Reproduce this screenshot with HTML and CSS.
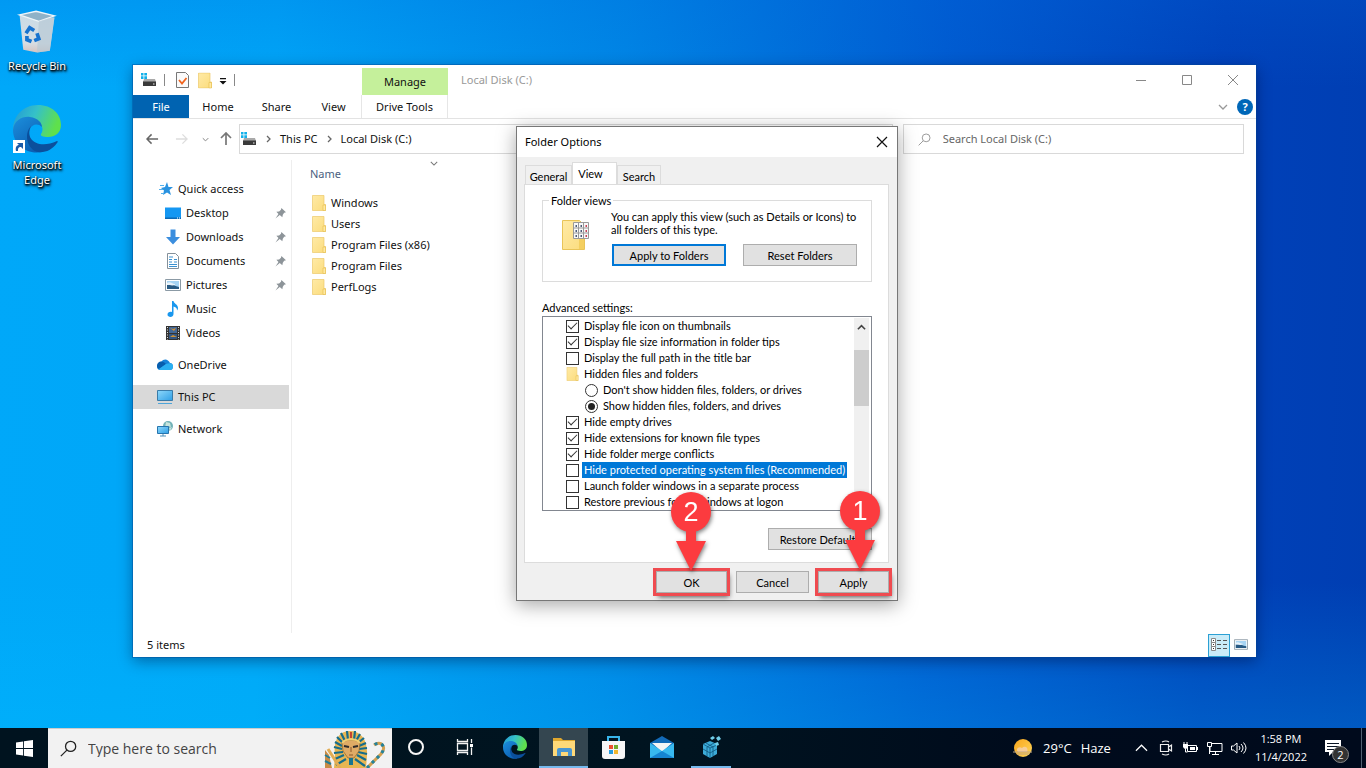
FILE: index.html
```html
<!DOCTYPE html>
<html lang="en">
<head>
<meta charset="utf-8">
<title>Folder Options</title>
<link rel="stylesheet" href="styles.css">
</head>
<body>
<svg class="sprite" aria-hidden="true">
  <defs>
    <linearGradient id="gEdgeA" x1="0" y1="0" x2="1" y2="0.3"><stop offset="0" stop-color="#2196d8"/><stop offset=".5" stop-color="#35c1c8"/><stop offset="1" stop-color="#5fe04c"/></linearGradient>
    <linearGradient id="gEdgeB" x1="0" y1="0" x2=".6" y2="1"><stop offset="0" stop-color="#1c8fdc"/><stop offset="1" stop-color="#0c60b4"/></linearGradient>
    <linearGradient id="gFolder" x1="0" y1="0" x2="1" y2="1"><stop offset="0" stop-color="#ffeaa6"/><stop offset="1" stop-color="#fbdc7c"/></linearGradient>
    <linearGradient id="gScreen" x1="0" y1="0" x2="1" y2="1"><stop offset="0" stop-color="#8ed8fb"/><stop offset="1" stop-color="#2f9fe6"/></linearGradient>
    <linearGradient id="gBin" x1="0" y1="0" x2="0" y2="1"><stop offset="0" stop-color="#c9dbe6"/><stop offset=".75" stop-color="#d6dde3"/><stop offset="1" stop-color="#d5c3c0"/></linearGradient>
    <linearGradient id="gSun" x1="0" y1="0" x2="1" y2="1"><stop offset="0" stop-color="#f9a51c"/><stop offset="1" stop-color="#ffd75a"/></linearGradient>
  </defs>
  <symbol id="folder" viewBox="0 0 14 16"><path d="M.5.5h11.500v9h1.500v6H.5z" fill="url(#gFolder)" stroke="#ecc96a" stroke-width=".7"/><path d="M11 10h2.500v5.500H11z" fill="#ffe9a0" stroke="#e5bc4c" stroke-width=".6"/></symbol>
  <symbol id="drive" viewBox="0 0 16 14"><path d="M0 0h2.500v2.500H0zM3.300 0H6v2.500H3.300zM0 3.300h2.500V6H0zM3.300 3.300H6V6H3.300z" fill="#12b0ea"/><path d="M3 6h11l1 3H2z" fill="#a9a9a9"/><path d="M2 8.500h13V13H2z" fill="#3a3a3a"/><path d="M12 10.500h1.500v1H12z" fill="#eee"/></symbol>
  <symbol id="edge" viewBox="0 0 48 48">
    <path d="M0 25C0 11 10 0 25 0c14 0 23 9 23 20 0 8-6 12-13 12-5 0-8-1-7-3 3-4 2-11-6-11C11 18 4 24 0 25z" fill="url(#gEdgeA)"/>
    <path d="M0 25c1-10 10-14 17-13 8 1 12 6 12 10-4-4-10-3-12 2-3 9 4 18 12 23C13 50 0 39 0 25z" fill="url(#gEdgeB)"/>
    <path d="M18 21c-7 13 7 24 26 15 1 0 1 1 0 2-5 7-12 10-19 9-10-2-15-17-7-26z" fill="#0b4f9c"/>
  </symbol>
  <symbol id="pin" viewBox="0 0 12 12"><path d="M7 0l5 4.500-2 .8-1.500 2L8 10 5.200 7.700.5 11.500 3.800 6.500 1.500 4.200l3-.4 2-1.800z" fill="#8d9499"/></symbol>
  <symbol id="picture" viewBox="0 0 16 12"><path d="M.5.500h15v11H.5z" fill="#fff" stroke="#8b9aa5"/><path d="M2 2h12v8H2z" fill="#a7d4f3"/><path d="M2 6c4-2 7 1 12 2v2H2z" fill="#285a83"/><path d="M2 4c3-2 5 1 8 1v1c-3 1-5 0-8 0z" fill="#e8f3fb"/></symbol>
  <symbol id="chev" viewBox="0 0 10 6"><path d="M1 1l4 4 4-4" fill="none" stroke="currentColor" stroke-width="1.300"/></symbol>
  <symbol id="lens" viewBox="0 0 16 16"><circle cx="10" cy="6" r="4.800" fill="none" stroke="currentColor" stroke-width="1.200"/><path d="M6.500 9.500L.8 15.200" stroke="currentColor" stroke-width="1.200"/></symbol>
</svg>

<main class="desktop">
  <div class="shortcuts">
    <a class="shortcut" href="#">
      <svg class="shortcut-icon" viewBox="0 0 48 48"><path d="M5 7l38 3-5 36-14 2-15-3z" fill="url(#gBin)"/><path d="M5 7l18-4 20 5-17 6z" fill="#8fb2c8" stroke="#eef5f9" stroke-width="1.500"/><path d="M26 14l17-5-5 37-14 2z" fill="#b5c8d4" opacity=".65"/><g fill="none" stroke="#1673cf" stroke-width="4"><path d="M12 27l4-6 5 3"/><path d="M24 27l2 6-5 2"/><path d="M18 36l-5-2v-4"/></g></svg>
      <span>Recycle Bin</span>
    </a>
    <a class="shortcut" href="#">
      <svg class="shortcut-icon large" viewBox="0 0 50 50"><use href="#edge" x="1" y="1" width="48" height="48"/><path d="M1 36h12v13H1z" fill="#fff"/><path d="M4 47c-1-4 1-6 3-6l-2-2h6v6l-2-2c-3 0-3 2-3 4z" fill="#1c5ba8"/></svg>
      <span>Microsoft<br>Edge</span>
    </a>
  </div>

  <section class="explorer" aria-label="Local Disk (C:)">
    <header class="titlebar">
      <div class="quickbar">
        <svg class="i16" viewBox="0 0 16 14"><use href="#drive"/></svg>
        <i class="bar"></i>
        <svg class="doc" viewBox="0 0 13 16"><path d="M.5.500h9l3 3v12H.5z" fill="#fafafa" stroke="#777"/><path d="M3 8l3 3.500L10.500 6" fill="none" stroke="#f0641e" stroke-width="1.800"/></svg>
        <svg class="fold" viewBox="0 0 14 16"><use href="#folder"/></svg>
        <svg class="more" viewBox="0 0 8 7"><path d="M1 0h6v1.300H1zM.5 3h7L4 6.500z" fill="#111"/></svg>
        <i class="bar"></i>
      </div>
      <div class="manage">Manage</div>
      <h1 class="caption">Local Disk (C:)</h1>
      <div class="win-buttons">
        <button aria-label="Minimize"><svg viewBox="0 0 12 12"><path d="M1 6.500h10" stroke="#888"/></svg></button>
        <button aria-label="Maximize"><svg viewBox="0 0 12 12"><path d="M1.500 1.500h9v9h-9z" fill="none" stroke="#888"/></svg></button>
        <button aria-label="Close"><svg viewBox="0 0 12 12"><path d="M1 1l10 10M11 1L1 11" stroke="#888"/></svg></button>
      </div>
    </header>
    <nav class="ribbon">
      <button class="file">File</button>
      <button class="home">Home</button>
      <button class="share">Share</button>
      <button class="view">View</button>
      <button class="tools">Drive Tools</button>
      <div class="ribbon-end">
        <svg class="chev" viewBox="0 0 10 6"><use href="#chev"/></svg>
        <button class="help" aria-label="Help">?</button>
      </div>
    </nav>
    <div class="navigate">
      <div class="arrows">
        <svg class="arrow" viewBox="0 0 14 12"><path d="M6 1L1 6l5 5M1 6h12" fill="none" stroke="#666" stroke-width="1.600"/></svg>
        <svg class="arrow pale" viewBox="0 0 14 12"><path d="M8 1l5 5-5 5M13 6H1" fill="none" stroke="#ddd" stroke-width="1.400"/></svg>
        <svg class="tiny" viewBox="0 0 10 6"><use href="#chev"/></svg>
        <svg class="up" viewBox="0 0 12 14"><path d="M1 6l5-5 5 5M6 1v12" fill="none" stroke="#777" stroke-width="1.700"/></svg>
      </div>
      <div class="address">
        <svg class="i16" viewBox="0 0 16 14"><use href="#drive"/></svg>
        <svg class="crumb" viewBox="0 0 5 8"><path d="M1 1l3 3-3 3" fill="none" stroke="#666" stroke-width="1.300"/></svg>
        <a href="#">This PC</a>
        <svg class="crumb" viewBox="0 0 5 8"><path d="M1 1l3 3-3 3" fill="none" stroke="#666" stroke-width="1.300"/></svg>
        <a href="#">Local Disk (C:)</a>
      </div>
      <label class="find">
        <svg viewBox="0 0 16 16"><use href="#lens"/></svg>
        <input type="text" placeholder="Search Local Disk (C:)" aria-label="Search Local Disk (C:)">
      </label>
    </div>
    <div class="content">
      <nav class="tree">
        <a href="#" class="root"><svg viewBox="0 0 16 16"><path d="M10 1l1.500 5H16l-3.500 3 1.500 5-4-2.500L6 14l1-4.500L4 7l4-1z" fill="#2a93e0"/><path d="M3 4.500h4M2 8.500h4M4 12.500h3" stroke="#55b1ec"/></svg>Quick access</a>
        <a href="#"><svg viewBox="0 0 16 16"><path d="M0 2.500h16v11H0z" fill="#1597f2"/><path d="M0 12.500h16v1.500H0z" fill="#0c68b5"/><path d="M12 12.500h1v1h-1zM14 12.500h1v1h-1z" fill="#fff"/></svg>Desktop<svg class="pin" viewBox="0 0 12 12"><use href="#pin"/></svg></a>
        <a href="#"><svg viewBox="0 0 16 16"><path d="M5.500.500h5V8H15l-7 7.500L1 8h4.500z" fill="#3b8ede"/></svg>Downloads<svg class="pin" viewBox="0 0 12 12"><use href="#pin"/></svg></a>
        <a href="#"><svg viewBox="0 0 16 16"><path d="M2.500.500h8l3 3v12h-11z" fill="#fff" stroke="#84909a"/><path d="M4 4h4M4 6.500h3M9 6.500h3M4 9h3M9 9h3M4 11.500h8M4 13.500h8" stroke="#3b91d0"/></svg>Documents<svg class="pin" viewBox="0 0 12 12"><use href="#pin"/></svg></a>
        <a href="#"><svg viewBox="0 0 16 16"><use href="#picture" y="2" width="16" height="12"/></svg>Pictures<svg class="pin" viewBox="0 0 12 12"><use href="#pin"/></svg></a>
        <a href="#"><svg viewBox="0 0 16 16"><path d="M7 0h1.500c.5 3 4.500 3 4.500 7 0 1-.5 2-1 2.500.3-3-2-3.500-3.500-4V13c0 4-6 3.500-6 .7C2.500 11 5 10.500 7 11z" fill="#1997ee"/></svg>Music</a>
        <a href="#"><svg viewBox="0 0 16 16"><path d="M1 1h14v14H1z" fill="#333"/><path d="M4 2h8v6H4z" fill="#426796"/><path d="M4 9h8v5H4z" fill="#345783"/><path d="M5 3l3 1 3-1-2 3zM5 12l3-2 4 2z" fill="#cf9136"/><path d="M2.500 2v13M13.500 2v13" stroke="#ddd" stroke-dasharray="1 1.500"/></svg>Videos</a>
        <a href="#" class="top"><svg viewBox="0 0 16 16"><path d="M4 5c3-4 7-3 9 1 4 0 4 7 0 7H3C-1 13-1 6 4 5z" fill="#1683d9"/><path d="M1 6c3-3 6-1 8 1l-7 5c-3-1-2-5-1-6z" fill="#075eae"/><path d="M2 12l7-5c5-2 7 0 7 2 0 3-1 4-3 4H3z" fill="#2bb0f2"/></svg>OneDrive</a>
        <a href="#" class="top selected"><svg viewBox="0 0 16 16"><path d="M.5 1.500h15v10H.5z" fill="url(#gScreen)" stroke="#3a7ba8"/><path d="M1 14.500h14" stroke="#4ea5d9"/></svg>This PC</a>
        <a href="#" class="top"><svg viewBox="0 0 16 16"><circle cx="11" cy="5" r="5" fill="#72b2b8"/><path d="M9 1l4 1 1 4-3-1-3 2zM12 7l3-1-2 4z" fill="#c7e4dc"/><path d="M.5 5.500h11v7H.5z" fill="url(#gScreen)" stroke="#2775ae"/><path d="M3 15h6M6 13v2" stroke="#5090b8"/></svg>Network</a>
      </nav>
      <div class="files">
        <svg class="sort" viewBox="0 0 10 6"><use href="#chev"/></svg>
        <h2>Name</h2>
        <ul>
          <li><svg viewBox="0 0 14 16"><use href="#folder"/></svg>Windows</li>
          <li><svg viewBox="0 0 14 16"><use href="#folder"/></svg>Users</li>
          <li><svg viewBox="0 0 14 16"><use href="#folder"/></svg>Program Files (x86)</li>
          <li><svg viewBox="0 0 14 16"><use href="#folder"/></svg>Program Files</li>
          <li><svg viewBox="0 0 14 16"><use href="#folder"/></svg>PerfLogs</li>
        </ul>
      </div>
    </div>
    <footer class="status">
      <span>5 items</span>
      <button class="details on" aria-label="Details view"><svg viewBox="0 0 16 14"><path d="M.5.500h4v4h-4zM.5 4.500h4v4h-4zM.5 8.500h4v4h-4z" fill="#fff" stroke="#888"/><path d="M2 2h1v1H2zM2 6h1v1H2zM2 10h1v1H2z" fill="#333"/><path d="M6 2.500h4M12 2.500h4M6 6.500h4M12 6.500h4M6 10.500h4M12 10.500h4" stroke="#555"/></svg></button>
      <button class="details" aria-label="Large icons view"><svg viewBox="0 0 16 14"><use href="#picture" x="1" y="1" width="14" height="11"/></svg></button>
    </footer>
  </section>

  <section class="dialog" role="dialog" aria-label="Folder Options">
    <header class="dialog-title">
      <h2>Folder Options</h2>
      <button aria-label="Close"><svg viewBox="0 0 12 12"><path d="M1 1l10 10M11 1L1 11" stroke="#111" stroke-width="1.200"/></svg></button>
    </header>
    <div class="tabs">
      <button>General</button>
      <button class="active">View</button>
      <button>Search</button>
    </div>
    <div class="panel">
      <fieldset>
        <legend>Folder views</legend>
        <svg class="views-icon" viewBox="0 0 28 30"><path d="M.5.500h17l5 5v24H.5z" fill="url(#gFolder)" stroke="#e9c458"/><path d="M17 18h5v11h-5z" fill="#f4cf60"/><path d="M11.500 2.500h15v16h-15z" fill="#f8f8f8" stroke="#999"/><path d="M16.500 3v15M21.500 3v15M12 8h14M12 13h14" stroke="#999"/><path d="M13.500 5h1.500v2h-1.500zM18.500 5H20v2h-1.500zM13.500 10h1.500v2h-1.500zM18.500 10H20v2h-1.500zM13.500 15h1.500v2h-1.500zM18.500 15H20v2h-1.500z" fill="#4c5b77"/><path d="M23.500 5H25v2h-1.500zM23.500 10H25v2h-1.500zM23.500 15H25v2h-1.500z" fill="#c84457"/></svg>
        <div class="views-text">
          <p>You can apply this view (such as Details or Icons) to<br>all folders of this type.</p>
          <div class="pair">
            <button class="push primary">Apply to Folders</button>
            <button class="push">Reset Folders</button>
          </div>
        </div>
      </fieldset>
      <h3>Advanced settings:</h3>
      <div class="listbox">
        <div class="options">
          <label><input type="checkbox" checked><span>Display file icon on thumbnails</span></label>
          <label><input type="checkbox" checked><span>Display file size information in folder tips</span></label>
          <label><input type="checkbox"><span>Display the full path in the title bar</span></label>
          <div class="group"><svg viewBox="0 0 14 16"><use href="#folder"/></svg><span>Hidden files and folders</span></div>
          <label class="sub"><input type="radio" name="hidden"><span>Don't show hidden files, folders, or drives</span></label>
          <label class="sub"><input type="radio" name="hidden" checked><span>Show hidden files, folders, and drives</span></label>
          <label><input type="checkbox" checked><span>Hide empty drives</span></label>
          <label><input type="checkbox" checked><span>Hide extensions for known file types</span></label>
          <label><input type="checkbox" checked><span>Hide folder merge conflicts</span></label>
          <label class="picked"><input type="checkbox"><span>Hide protected operating system files (Recommended)</span></label>
          <label><input type="checkbox"><span>Launch folder windows in a separate process</span></label>
          <label><input type="checkbox"><span>Restore previous folder windows at logon</span></label>
        </div>
        <div class="scrollbar"><svg viewBox="0 0 10 6"><path d="M1 5.500l4-4 4 4" fill="none" stroke="#444" stroke-width="1.800"/></svg><i></i></div>
      </div>
      <button class="push restore">Restore Defaults</button>
    </div>
    <footer class="actions">
      <button class="push marked">OK</button>
      <button class="push">Cancel</button>
      <button class="push marked">Apply</button>
    </footer>
    <div class="callout second"><b>2</b><svg viewBox="0 0 30 42"><path d="M10 0h10v12h10L15 42 0 12h10z" fill="#fc3b3f"/></svg></div>
    <div class="callout first"><b>1</b><svg viewBox="0 0 30 42"><path d="M10 0h10v12h10L15 42 0 12h10z" fill="#fc3b3f"/></svg></div>
  </section>
</main>

<footer class="taskbar">
  <button class="start" aria-label="Start"><svg viewBox="0 0 16 16"><path d="M0 2.300L6.700 1.300v6.300H0zM7.500 1.200L16 0v7.600H7.500zM0 8.400h6.700v6.300L0 13.700zM7.500 8.400H16V16l-8.500-1.200z" fill="#fff"/></svg></button>
  <label class="search">
    <svg class="search-lens" viewBox="0 0 16 16"><use href="#lens"/></svg>
    <input type="text" placeholder="Type here to search" aria-label="Type here to search">
    <svg class="pharaoh" viewBox="0 0 64 39">
      <path d="M1 39V21l4 5 3 13z" fill="#c98b45"/><path d="M1 26l5 3M1 32l6 3" stroke="#247d94" stroke-width="2"/>
      <path d="M10 39l1-12c-2-16 4-25 15-25s18 9 17 25l-1 12z" fill="#e7b653"/>
      <g fill="none" stroke="#166d8c" stroke-width="2.200"><path d="M23 2l1 9M17 4l4 8M13 8l6 6M11 13l7 4M10 18l8 2M10 24l9-1M11 30l9-4M12 36l10-6M31 2l-1 9M36 5l-4 7M40 9l-6 5M42 14l-7 3M43 19l-8 1M43 25l-9-2M42 31l-9-5M41 37l-10-7"/></g>
      <path d="M18 14c4-4 14-4 18 0l-1 8-5 7h-6l-5-7z" fill="#dfab66" stroke="#8c632e" stroke-width=".7"/>
      <path d="M18 14c4-5 14-5 18 0" fill="none" stroke="#f2cf73" stroke-width="2"/>
      <path d="M20 17l5 1M29 18l5-1" stroke="#302b2a" stroke-width="2"/><path d="M27 18v5M25 26h4" stroke="#8c572a"/><path d="M25 29h4v7h-4z" fill="#177591"/><path d="M26 3h2v6h-2z" fill="#c34532"/>
      <path d="M43 39l14-14c6-7 0-14-7-9" fill="none" stroke="#d5a04f" stroke-width="3"/><path d="M43 39l14-14c6-7 0-14-7-9" fill="none" stroke="#23839c" stroke-width="3" stroke-dasharray="3 4"/>
      <path d="M4 20l12 19" stroke="#e2ad54" stroke-width="3"/>
    </svg>
  </label>
  <nav class="apps">
    <button aria-label="Cortana"><svg viewBox="0 0 24 24"><circle cx="11" cy="12" r="7" fill="none" stroke="#f6f6f6" stroke-width="2"/></svg></button>
    <button aria-label="Task View"><svg viewBox="0 0 24 24"><path d="M3.500 8.500h10v7h-10zM3.500 4v2.500h10V4M3.500 20v-2.500h10V20M17.500 4v4M17.500 12.500V20" fill="none" stroke="#f2f2f2" stroke-width="1.300"/><path d="M16 9h3v3h-3z" fill="#fff"/></svg></button>
    <button aria-label="Microsoft Edge"><svg viewBox="0 0 24 24"><use href="#edge" width="24" height="24"/></svg></button>
    <button class="current" aria-label="File Explorer"><svg viewBox="0 0 24 24"><path d="M1 3h8l2 2h12v16H1z" fill="#dfa72e"/><path d="M1 6h22v15H1z" fill="#ffd978"/><path d="M5 21v-6q0-2 2-2h11q2 0 2 2v6h-4v-4H9v4z" fill="#4a96d1"/></svg></button>
    <button aria-label="Microsoft Store"><svg viewBox="0 0 24 24"><path d="M7 6V2h11v4" fill="none" stroke="#38b6ec" stroke-width="2"/><path d="M1 6h23v15q0 3-3 3H4q-3 0-3-3z" fill="#f6f6f6"/><path d="M8 10h4v4H8z" fill="#eb5032"/><path d="M13 10h4v4h-4z" fill="#72ad2d"/><path d="M8 15h4v4H8z" fill="#249bdd"/><path d="M13 15h4v4h-4z" fill="#f1b52b"/></svg></button>
    <button aria-label="Mail"><svg viewBox="0 0 24 24"><path d="M0 8l12-7 12 7v14H0z" fill="#126ab7"/><path d="M2 8h20l-10 9z" fill="#f5f5f5"/><path d="M0 8l12 8L24 8v15H0z" fill="#38b9ef"/><path d="M0 23l12-7 12 7z" fill="#1684d1"/></svg></button>
    <button class="open" aria-label="Registry Editor"><svg viewBox="0 0 24 24"><path d="M4 9l7-3 7 3v10l-7 4-7-4z" fill="#3cabd8"/><path d="M4 9l7 4 7-3M4 14l7 4 7-4M7 8l7 4v9M15 8l-7 4v9M11 13v10" fill="none" stroke="#0e567c" stroke-width=".8"/><path d="M11 3l3-2 2 2-3 2zM17 3l3-2 2 3-3 2zM16 8l3-1 1 3-3 1z" fill="#71cfea"/></svg></button>
  </nav>
  <div class="tray">
    <div class="weather"><svg viewBox="0 0 22 20"><circle cx="11" cy="10" r="9" fill="url(#gSun)"/><path d="M6 14c-3-3 1-6 4-4 3-3 7 0 5 4" fill="#f7cd98"/><path d="M1 14h19M5 16h12" stroke="#bfa584"/></svg><span>29°C</span><span>Haze</span></div>
    <svg class="caret" viewBox="0 0 14 8"><path d="M1 7l6-6 6 6" fill="none" stroke="#fff" stroke-width="1.300"/></svg>
    <svg class="tray-icon" viewBox="0 0 16 16"><path d="M3 2q4-2 7 0M3 14q4 2 7 0M1.500 4.500h8v7h-8zM9.500 7l3-2v6l-3-2" fill="none" stroke="#eee" stroke-width="1.200"/></svg>
    <svg class="tray-icon" viewBox="0 0 16 16"><path d="M4.500 5.500h9v6h-9z" fill="none" stroke="#fff"/><path d="M7 7h5v3H7zM14 7h1v3h-1zM0 4h5v3q-1 2-2.500 2T0 7z" fill="#fff"/><path d="M1 2v2M4 2v2M2.500 9v3h2" fill="none" stroke="#fff"/></svg>
    <svg class="tray-icon" viewBox="0 0 16 16"><path d="M3 3.500h12v8H3zM8.500 11.500V15M5 14.500h7" fill="none" stroke="#fff"/><path d="M.5 2.500h4v4h-4zM2.500 6.500V14" fill="#061121" stroke="#fff"/></svg>
    <svg class="tray-icon" viewBox="0 0 16 16"><path d="M.5 6h2L6 3v10l-3.500-3h-2zM8 6q2 2 0 4M10 4q4 4 0 8M12.500 2.500q5 5.500 0 11" fill="none" stroke="#fff"/></svg>
    <div class="clock"><span>1:58 PM</span><span>11/4/2022</span></div>
    <button class="notice" aria-label="Notifications"><svg viewBox="0 0 18 18"><path d="M1 1h16v12H9l-4 4v-4H1z" fill="#fff"/><path d="M3 4.500h12M3 7.500h12M3 10.500h7" stroke="#0a1525"/></svg><b>2</b></button>
  </div>
</footer>
</body>
</html>
```
FILE: styles.css
```css
* { box-sizing: border-box; }
body {
  margin: 0;
  min-height: 100vh;
  display: flex;
  flex-direction: column;
  overflow: hidden;
  font: 11px/16px "Noto Sans", "Open Sans", sans-serif;
  color: #111;
  background: linear-gradient(92deg, #00a8f9 0%, #00a6f7 20%, #0086e5 45%, #005bd0 68%, #0041b9 88%, #003eb2 100%);
}
button, input { font: inherit; color: inherit; }
button { border: 0; padding: 0; background: none; }
a { color: inherit; text-decoration: none; }
h1, h2, h3, p, ul { margin: 0; padding: 0; font: inherit; list-style: none; }
svg { display: block; flex: none; }
.sprite { position: absolute; width: 0; height: 0; }
.i16 { width: 16px; height: 14px; }

.desktop {
  position: relative;
  flex: 1;
  background:
    linear-gradient(180deg, rgba(0, 100, 220, .22), transparent 12%, transparent 80%, rgba(0, 200, 255, .2));
}
.shortcuts { width: 74px; padding-top: 8px; display: flex; flex-direction: column; gap: 31px; }
.shortcut {
  display: flex; flex-direction: column; align-items: center;
  color: #fff; line-height: 15px; text-align: center;
  text-shadow: 1px 1px 2px #000, 0 1px 2px #000, 1px 2px 3px #000;
}
.shortcut-icon { width: 44px; height: 45px; margin-bottom: 5px; }
.shortcut-icon.large { width: 50px; height: 50px; margin-bottom: 3px; }

.explorer {
  position: absolute;
  inset: 65px 110px 71px 133px;
  display: flex; flex-direction: column;
  background: #fff;
  box-shadow: 0 0 0 1px rgba(0, 70, 150, .4), 0 4px 14px rgba(0, 0, 40, .4);
}
.titlebar { display: flex; height: 30px; }
.quickbar { width: 229px; display: flex; align-items: center; padding-left: 8px; }
.bar { width: 1px; height: 12px; background: #888; }
.quickbar .bar { margin-left: 7px; }
.doc { width: 13px; height: 16px; margin-left: 11px; }
.fold { width: 14px; height: 17px; margin-left: 9px; }
.more { width: 8px; height: 7px; margin: 2px 0 0 7px; }
.manage { width: 86px; margin-top: 3px; background: #c5f09b; line-height: 28px; text-align: center; }
.caption { margin-left: 13px; line-height: 30px; color: #999; }
.win-buttons { margin-left: auto; display: flex; }
.win-buttons button { width: 46px; display: grid; place-items: center; }
.win-buttons svg { width: 12px; height: 12px; }
.ribbon { display: flex; height: 24px; border-bottom: 1px solid #e3e3e3; }
.file { width: 56px; background: #0063b1; color: #fff; }
.home { width: 58px; }
.share { width: 59px; }
.view { width: 55px; }
.tools { width: 87px; border: solid #e6e6e6; border-width: 0 1px; }
.ribbon-end { margin-left: auto; padding-right: 3px; display: flex; align-items: center; gap: 9px; color: #999; }
.chev { width: 10px; height: 6px; }
.help { width: 16px; height: 16px; border-radius: 50%; background: #0067b8; color: #fff; font-weight: 700; line-height: 16px; }
.navigate { display: flex; padding: 5px 12px 6px 0; height: 41px; }
.arrows { width: 106px; display: flex; align-items: center; padding-left: 13px; color: #777; }
.arrow { width: 13px; height: 12px; }
.arrow.pale { margin-left: 16px; }
.tiny { width: 7px; height: 5px; margin-left: 14px; }
.up { width: 12px; height: 14px; margin-left: 11px; }
.address {
  flex: 2; display: flex; align-items: center; gap: 9px; padding-left: 1px;
  border: 1px solid #d9d9d9;
}
.crumb { width: 5px; height: 8px; }
.find { flex: 1; margin-left: 10px; padding-left: 14px; display: flex; align-items: center; gap: 12px; border: 1px solid #d9d9d9; color: #777; }
.find svg { width: 13px; height: 13px; color: #999; }
.find input { flex: 1; min-width: 0; border: 0; padding: 0; background: none; outline: 0; }
.find input::placeholder { color: #666; opacity: 1; }
.content { flex: 1; min-height: 0; display: flex; }
.tree { width: 159px; padding-top: 17px; border-right: 1px solid #eee; }
.tree a { display: flex; align-items: center; gap: 5px; height: 24px; padding-left: 32px; margin-right: 2px; }
.tree svg { width: 16px; height: 16px; }
.tree .root { padding-left: 24px; }
.tree .top { padding-left: 24px; margin-top: 8px; }
.tree .selected { background: #d9d9d9; }
.tree .pin { width: 11px; height: 11px; margin: 0 3px 0 auto; }
.files { padding-left: 18px; flex: 1; }
.sort { width: 8px; height: 5px; margin: 1px 0 0 120px; color: #777; }
.files h2 { color: #4b5f80; line-height: 16px; }
.files ul { padding-top: 10px; }
.files li { display: flex; align-items: center; gap: 5px; height: 21px; padding-left: 2px; }
.files li svg { width: 14px; height: 16px; }
.status { display: flex; align-items: center; height: 24px; padding: 0 4px 0 14px; }
.status span { margin-right: auto; }
.details { width: 22px; height: 23px; display: grid; place-items: center; }
.details svg { width: 16px; height: 14px; }
.details.on { background: #c9ebf8; border: 1px solid #2ba0d4; }

.dialog {
  position: absolute; left: 516px; top: 126px; width: 382px;
  border: 1px solid #777; background: #f0f0f0; color: #000;
  font: 11px/13px Lato, "Liberation Sans", sans-serif;
  box-shadow: 0 4px 18px rgba(0, 0, 0, .35);
}
.dialog-title { display: flex; align-items: center; height: 30px; padding: 0 9px 0 8px; background: #fff; font: 11px/16px "Noto Sans", sans-serif; }
.dialog-title button { margin-left: auto; }
.dialog-title svg { width: 12px; height: 12px; }
.tabs { display: flex; align-items: flex-end; padding: 5px 8px 0; }
.tabs button { height: 19px; width: 47px; padding: 2px 0 0; border: 1px solid #dcdcdc; border-bottom: 0; }
.tabs .active { height: 22px; width: 45px; padding: 0 8px 0 0; background: #fff; }
.tabs button:last-child { width: 44px; }
.panel { margin: 0 8px 0 7px; padding: 9px 16px 12px 17px; background: #fff; border: 1px solid #dcdcdc; }
fieldset { margin: 0; min-width: 0; height: 88px; padding: 3px 0 0 19px; display: flex; align-items: flex-start; border: 1px solid #dcdcdc; }
legend { margin-left: -13px; padding: 0 2px; }
.views-icon { width: 28px; height: 30px; margin-top: 10px; }
.views-text { margin-left: 21px; white-space: nowrap; }
.views-text p { margin-bottom: 8px; }
.pair { display: flex; gap: 17px; padding-left: 1px; }
.push { height: 22px; background: #e1e1e1; border: 1px solid #adadad; }
.pair .push { width: 114px; }
.push.primary { border: 2px solid #0078d7; }
h3 { padding-top: 19px; }
.listbox { display: flex; margin-top: 2px; padding: 1px 2px 0 23px; border: 1px solid #828790; }
.options { flex: 1; white-space: nowrap; }
.options label, .group { display: flex; align-items: center; height: 16px; gap: 3px; }
.options span { padding: 1px 2px; line-height: 14px; }
.options .sub { padding-left: 19px; }
.options input { appearance: none; width: 13px; height: 13px; margin: 0; border: 1px solid #333; background: #fff; display: grid; place-items: center; flex: none; }
.options input[type="radio"] { border-radius: 50%; }
.options [type="checkbox"]:checked::before { content: ""; width: 8px; height: 4px; margin-top: -3px; border: solid #333; border-width: 0 0 1px 1px; transform: rotate(-45deg); }
.options [type="radio"]:checked::before { content: ""; width: 7px; height: 7px; border-radius: 50%; background: #222; }
.group svg { width: 13px; height: 14px; }
.picked span { background: #0078d7; color: #fff; }
.scrollbar { width: 15px; background: #f0f0f0; display: flex; flex-direction: column; align-items: center; padding-top: 6px; }
.scrollbar svg { width: 9px; height: 6px; }
.scrollbar i { width: 15px; height: 56px; margin-top: 20px; background: #cdcdcd; }
.restore { display: block; width: 104px; margin: 17px 0 0 auto; }
.actions { display: flex; justify-content: flex-end; gap: 9px; padding: 8px 8px 7px; }
.actions .push { width: 73px; }
.actions .marked { width: 71px; outline: 3px solid #ef4b50; box-shadow: 2px 4px 5px rgba(0, 0, 0, .65); }
.callout { position: absolute; width: 40px; display: flex; flex-direction: column; align-items: center; filter: drop-shadow(1px 2px 2px rgba(0, 0, 0, .5)); }
.callout b { width: 40px; height: 40px; border-radius: 50%; background: #fc3b3f; color: #fff; font: 27px/40px "Liberation Sans", Arial, sans-serif; text-align: center; }
.callout svg { width: 30px; height: 42px; margin-top: -3px; }
.second { left: 154px; bottom: 29px; }
.first { left: 323px; bottom: 30px; }

.taskbar { display: flex; height: 40px; background: linear-gradient(90deg, #00131f, #001420 50%, #000b1c 75%, #000a1c); color: #fff; font-family: "Open Sans", sans-serif; }
.start { width: 48px; display: grid; place-items: center; }
.start svg { width: 17px; height: 17px; }
.search { width: 344px; display: flex; align-items: center; background: #f2f2f2; padding-left: 12px; color: #222; border-top: 1px solid #ccc; }
.search-lens { width: 17px; height: 17px; }
.search input { flex: 1; min-width: 0; padding: 0; margin-left: 11px; border: 0; background: none; outline: 0; font-size: 14px; }
.search input::placeholder { color: #444; opacity: 1; }
.pharaoh { width: 64px; height: 39px; margin-right: 4px; }
.apps { display: flex; }
.apps button { width: 49px; display: grid; place-items: center; border-bottom: 2px solid transparent; }
.apps svg { width: 24px; height: 24px; }
.apps .current { background: #344650; border-color: #76b9ed; }
.apps .open { background: linear-gradient(#76b9ed, #76b9ed) center bottom / 40px 2px no-repeat border-box; }
.tray { margin-left: auto; display: flex; align-items: center; gap: 8px; padding-right: 4px; }
.weather { display: flex; align-items: center; gap: 9px; font-size: 13px; margin-right: 16px; }
.weather svg { width: 22px; height: 20px; }
.caret { width: 13px; height: 8px; margin-right: 3px; }
.tray-icon { width: 16px; height: 16px; }
.clock { display: flex; flex-direction: column; align-items: center; line-height: 18px; }
.notice { position: relative; width: 47px; height: 40px; display: grid; place-items: center; padding-right: 10px; border-right: 1px solid #506070; }
.notice svg { width: 18px; height: 18px; }
.notice b { position: absolute; right: 12px; bottom: 5px; width: 17px; height: 17px; border: 1px solid #888; border-radius: 50%; background: #333; font: 11px/15px "Open Sans", sans-serif; }
```
